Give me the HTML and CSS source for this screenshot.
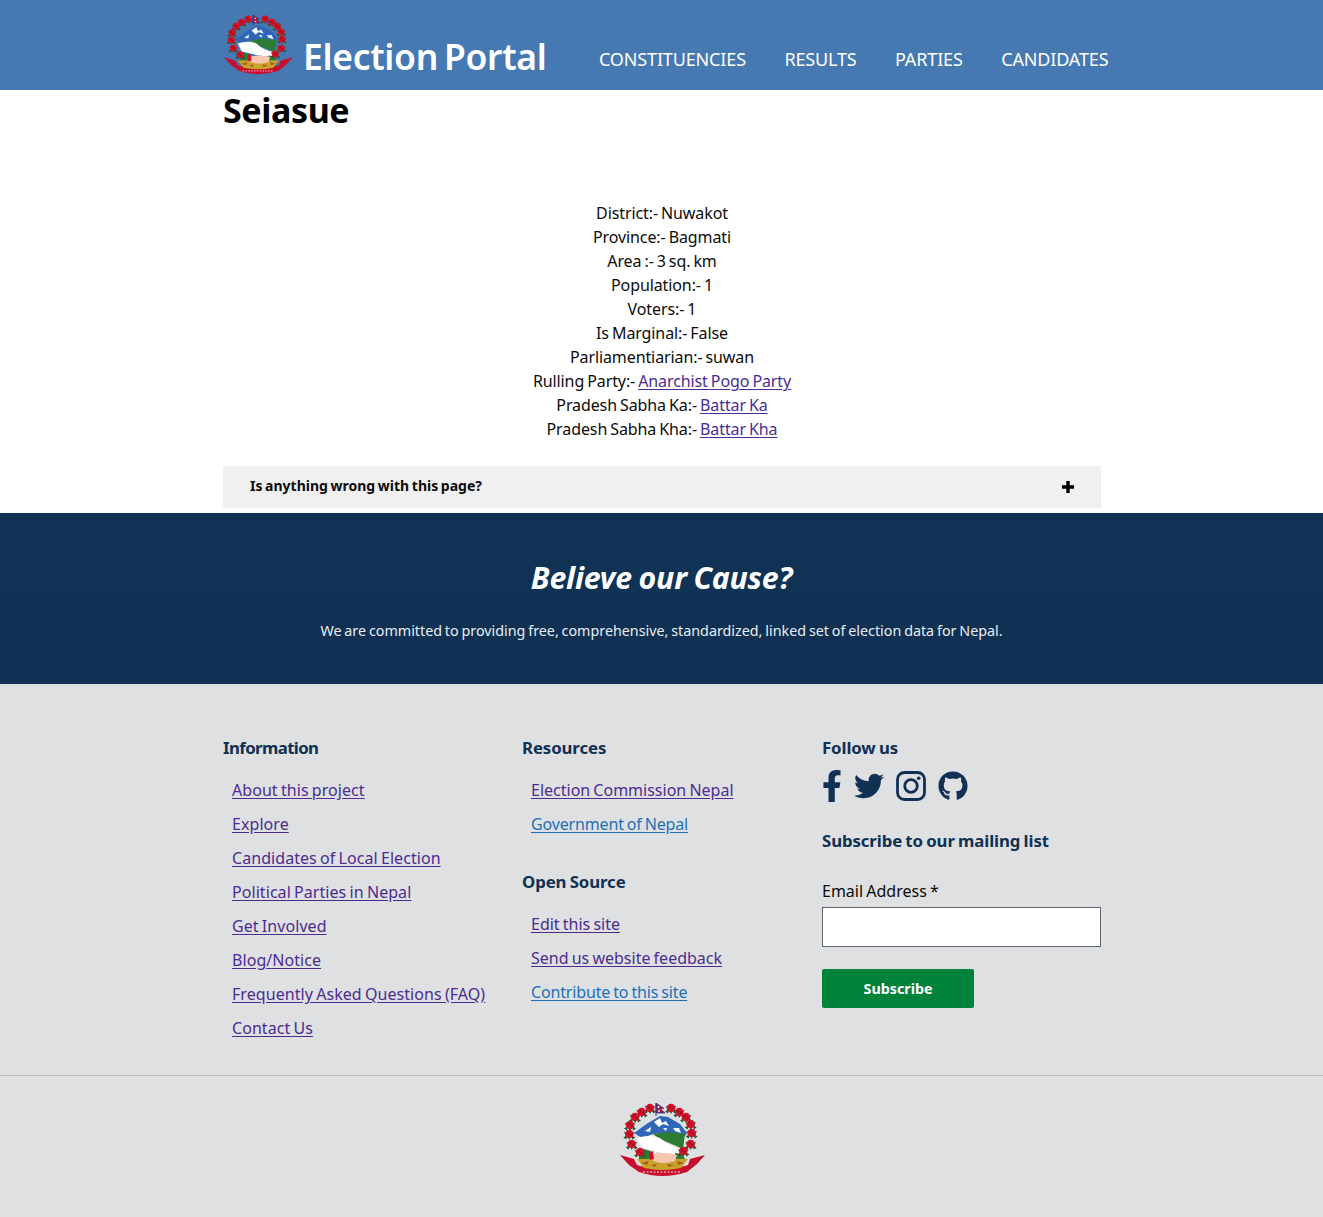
FILE: index.html
```html
<!DOCTYPE html>
<html lang="en">
<head>
<meta charset="utf-8">
<title>Seiasue - Election Portal</title>
<link rel="stylesheet" href="styles.css">
</head>
<body>
<svg class="defs" width="0" height="0" aria-hidden="true">
  <defs>
    <g id="flower">
      <path d="M-6 3.5 L-2 1 L-3 5.5 Z M6 3.5 L2 1 L3 5.5 Z M0 6 L-2 2 L2 2 Z M-5.5 -2 L-2 -1 L-3.5 1 Z M5.5 -2 L2 -1 L3.5 1 Z" fill="#1c5a2a"/>
      <circle r="4.3" fill="#d2132a"/>
      <circle cx="-1.3" cy="-0.9" r="1.3" fill="#a30d20"/>
      <circle cx="1.4" cy="1" r="1.2" fill="#a30d20"/>
    </g>
    <symbol id="emblem" viewBox="0 0 86 74">
      <path d="M15 30 L29 20 L41 13 L49 14 L61 21 L68 30 L66 33 L49 30 L34 31 L23 35 Z" fill="#2f66b8"/>
      <path d="M35 19 L41 15 L43 20 L47 18 L50 23 L44 21 L40 24 Z M26 28 L32 24 L31 29 Z M54 25 L60 25 L62 30 L56 28 Z M44 25 L48 25 L47 28 Z" fill="#fff"/>
      <path d="M34 31 L49 29 L66 31 L64 46 L41 36 Z" fill="#2d7a33"/>
      <path d="M18 35 Q30 31 41 35 Q50 44 65 46 L63 52 L44 50 L23 45 Z" fill="#fff"/>
      <path d="M20 45 L32 48 L33 56 L20 56 Z M56 50 L63 51 L66 56 L56 56 Z" fill="#2d7a33"/>
      <path d="M1 52 L15 56 L18 62 Q43 70 69 62 L71 56 L86 52 L78 61 L68 69 Q43 77 20 69 L10 62 Z" fill="#c8102e"/>
      <path d="M18 56 L69 56 L62 65 Q43 69 25 65 Z" fill="#c9a227"/>
      <path d="M22 60 L30 58 L28 62 Z M58 58 L65 60 L59 62 Z M32 62 L38 61 L36 64 Z M48 61 L55 62 L50 64 Z" fill="#a85a20"/>
      <path d="M32 52 Q44 48 58 52 L56 58 Q44 62 34 58 Z" fill="#f6c7b0"/>
      <path d="M30 50 L34 48 L35 56 L31 57 Z" fill="#c8102e"/>
      <path d="M24 69 L62 69" stroke="#f3d9d9" stroke-width="1" stroke-dasharray="2 1.5" fill="none"/>
      <use href="#flower" x="31" y="5"/><use href="#flower" x="22.7" y="9"/><use href="#flower" x="16" y="14"/>
      <use href="#flower" x="11" y="22"/><use href="#flower" x="10.3" y="31"/><use href="#flower" x="12.7" y="41"/><use href="#flower" x="21" y="49"/>
      <use href="#flower" x="52" y="5"/><use href="#flower" x="60.3" y="9"/><use href="#flower" x="67" y="14"/>
      <use href="#flower" x="71.7" y="21"/><use href="#flower" x="72.7" y="30"/><use href="#flower" x="71.7" y="41"/><use href="#flower" x="64.3" y="48"/>
      <path d="M37 0 L45 5.5 H41 L46 10 H37 Z" fill="#c8102e" stroke="#1b3c8c" stroke-width="0.8"/>
      <path d="M37 0 V13" stroke="#1b3c8c" stroke-width="1"/>
      <circle cx="39.5" cy="4" r="0.9" fill="#fff"/><circle cx="40" cy="8" r="0.9" fill="#fff"/>
    </symbol>
  </defs>
</svg>

<header class="site-header">
  <div class="container header-row">
    <a class="brand" href="#">
      <svg class="brand-logo"><use href="#emblem"/></svg>
      <span class="brand-name">Election Portal</span>
    </a>
    <nav class="main-nav">
      <a href="#">CONSTITUENCIES</a>
      <a href="#">RESULTS</a>
      <a href="#">PARTIES</a>
      <a href="#">CANDIDATES</a>
    </nav>
  </div>
</header>

<main class="container">
  <h1 class="page-title">Seiasue</h1>
  <div class="facts">
    <div>District:- Nuwakot</div>
    <div>Province:- Bagmati</div>
    <div>Area :- 3 sq. km</div>
    <div>Population:- 1</div>
    <div>Voters:- 1</div>
    <div>Is Marginal:- False</div>
    <div>Parliamentiarian:- suwan</div>
    <div>Rulling Party:- <a class="visited" href="#">Anarchist Pogo Party</a></div>
    <div>Pradesh Sabha Ka:- <a class="visited" href="#">Battar Ka</a></div>
    <div>Pradesh Sabha Kha:- <a class="visited" href="#">Battar Kha</a></div>
  </div>
  <div class="feedback">
    <span class="feedback-label">Is anything wrong with this page?</span>
    <svg class="plus" viewBox="0 0 12 12"><path d="M4.3 0h3.4v4.3H12v3.4H7.7V12H4.3V7.7H0V4.3h4.3z"/></svg>
  </div>
</main>

<section class="cause">
  <h2 class="cause-title">Believe our Cause?</h2>
  <p class="cause-text">We are committed to providing free, comprehensive, standardized, linked set of election data for Nepal.</p>
</section>

<footer class="site-footer">
  <div class="container footer-cols">
    <div class="col col-info">
      <h3 class="tight">Information</h3>
      <ul class="links">
        <li><a class="visited" href="#">About this project</a></li>
        <li><a class="visited" href="#">Explore</a></li>
        <li><a class="visited" href="#">Candidates of Local Election</a></li>
        <li><a class="visited" href="#">Political Parties in Nepal</a></li>
        <li><a class="visited" href="#">Get Involved</a></li>
        <li><a class="visited" href="#">Blog/Notice</a></li>
        <li><a class="visited" href="#">Frequently Asked Questions (FAQ)</a></li>
        <li><a class="visited" href="#">Contact Us</a></li>
      </ul>
    </div>
    <div class="col">
      <h3>Resources</h3>
      <ul class="links">
        <li><a class="visited" href="#">Election Commission Nepal</a></li>
        <li><a class="fresh" href="#">Government of Nepal</a></li>
      </ul>
      <h3 class="second">Open Source</h3>
      <ul class="links">
        <li><a class="visited" href="#">Edit this site</a></li>
        <li><a class="visited" href="#">Send us website feedback</a></li>
        <li><a class="fresh" href="#">Contribute to this site</a></li>
      </ul>
    </div>
    <div class="col">
      <h3>Follow us</h3>
      <div class="social">
        <svg class="ico ico-fb" viewBox="0 0 320 512"><path d="M279.14 288l14.22-92.66h-88.91v-60.13c0-25.35 12.42-50.06 52.24-50.06h40.42V6.26S260.43 0 225.36 0c-73.22 0-121.08 44.38-121.08 124.72v70.62H22.89V288h81.39v224h100.17V288z"/></svg>
        <svg class="ico ico-tw" viewBox="0 0 512 512"><path d="M459.37 151.716c.325 4.548.325 9.097.325 13.645 0 138.72-105.583 298.558-298.558 298.558-59.452 0-114.68-17.219-161.137-47.106 8.447.974 16.568 1.299 25.34 1.299 49.055 0 94.213-16.568 130.274-44.832-46.132-.975-84.792-31.188-98.112-72.772 6.498.974 12.995 1.624 19.818 1.624 9.421 0 18.843-1.3 27.614-3.573-48.081-9.747-84.143-51.98-84.143-102.985v-1.299c13.969 7.797 30.214 12.67 47.431 13.319-28.264-18.843-46.781-51.005-46.781-87.391 0-19.492 5.197-37.36 14.294-52.954 51.655 63.675 129.3 105.258 216.365 109.807-1.624-7.797-2.599-15.918-2.599-24.04 0-57.828 46.782-104.934 104.934-104.934 30.213 0 57.502 12.67 76.67 33.137 23.715-4.548 46.456-13.32 66.599-25.34-7.798 24.366-24.366 44.833-46.132 57.827 21.117-2.273 41.584-8.122 60.426-16.243-14.292 20.791-32.161 39.308-52.628 54.253z"/></svg>
        <svg class="ico ico-ig" viewBox="0 0 30 30"><rect class="ig-line" x="1.5" y="1.5" width="27" height="27" rx="7"/><circle class="ig-line" cx="15" cy="15" r="6.3"/><circle cx="22.7" cy="7.3" r="1.8"/></svg>
        <svg class="ico ico-gh" viewBox="0 0 496 512"><path d="M165.9 397.4c0 2-2.3 3.6-5.2 3.6-3.3.3-5.6-1.3-5.6-3.6 0-2 2.3-3.6 5.2-3.6 3-.3 5.6 1.3 5.6 3.6zm-31.1-4.5c-.7 2 1.3 4.3 4.3 4.9 2.6 1 5.6 0 6.2-2s-1.3-4.3-4.3-5.2c-2.6-.7-5.5.3-6.2 2.3zm44.2-1.7c-2.9.7-4.9 2.6-4.6 4.9.3 2 2.9 3.3 5.9 2.6 2.9-.7 4.9-2.6 4.6-4.6-.3-1.9-3-3.2-5.9-2.9zM244.8 8C106.1 8 0 113.3 0 252c0 110.9 69.8 205.8 169.5 239.2 12.8 2.3 17.3-5.6 17.3-12.1 0-6.2-.3-40.4-.3-61.4 0 0-70 15-84.7-29.8 0 0-11.4-29.1-27.8-36.6 0 0-22.9-15.7 1.6-15.4 0 0 24.9 2 38.6 25.8 21.9 38.6 58.6 27.5 72.9 20.9 2.3-16 8.8-27.1 16-33.7-55.9-6.2-112.3-14.3-112.3-110.5 0-27.5 7.6-41.3 23.6-58.9-2.6-6.5-11.1-33.3 2.6-67.9 20.9-6.5 69 27 69 27 20-5.6 41.5-8.5 62.8-8.5s42.8 2.9 62.8 8.5c0 0 48.1-33.6 69-27 13.7 34.7 5.2 61.4 2.6 67.9 16 17.7 25.8 31.5 25.8 58.9 0 96.5-58.9 104.2-114.8 110.5 9.2 7.9 17 22.9 17 46.4 0 33.7-.3 75.4-.3 83.6 0 6.5 4.6 14.4 17.3 12.1C428.2 457.8 496 362.9 496 252 496 113.3 383.5 8 244.8 8z"/></svg>
      </div>
      <h3 class="subscribe-title">Subscribe to our mailing list</h3>
      <form class="subscribe">
        <label class="field-label" for="email">Email Address *</label>
        <input class="field-input" id="email" type="email">
        <button class="btn" type="button">Subscribe</button>
      </form>
    </div>
  </div>
  <div class="footer-logo">
    <svg class="footer-emblem"><use href="#emblem"/></svg>
  </div>
</footer>
</body>
</html>
```

FILE: styles.css
```css
* { box-sizing: border-box; }
html, body { margin: 0; padding: 0; }
body {
  font-family: "Noto Sans", "Open Sans", sans-serif;
  font-size: 16px;
  line-height: 24px;
  word-spacing: -1px;
  color: #0b0c0c;
  background: #fff;
}
.defs { display: block; height: 0; }
.container { width: 878px; margin-left: calc(50% - 438.5px); }
a { text-underline-offset: 2px; }
.visited { color: #4c2c92; }
.fresh { color: #1d70b8; letter-spacing: -0.15px; }

.site-header { height: 90px; background: #4679b2; }
.header-row { display: flex; align-items: flex-start; height: 90px; }
.brand { display: flex; flex: none; align-items: flex-start; color: #fff; text-decoration: none; width: 376px; padding-top: 15px; }
.brand-logo { width: 70px; height: 60px; }
.brand-name { font-size: 35.5px; line-height: 40px; font-weight: 600; margin: 21px 0 0 10px; letter-spacing: -0.3px; word-spacing: -3px; white-space: nowrap; }
.main-nav { display: flex; gap: 38.5px; padding-top: 46px; }
.main-nav a { color: #fff; text-decoration: none; font-size: 18px; line-height: 26px; letter-spacing: -0.15px; white-space: nowrap; }

.page-title { margin: -1px 0 0; font-size: 34px; line-height: 42px; font-weight: 700; color: #000; letter-spacing: -0.4px; }
.facts { margin-top: 70px; text-align: center; letter-spacing: -0.1px; }
.feedback { display: flex; justify-content: space-between; align-items: center; height: 42px; margin-top: 25px; padding: 0 27px; background: #f0f0f0; font-size: 14px; line-height: 40px; font-weight: 700; word-spacing: -1px; }
.feedback-label { margin-top: -2px; }
.plus { width: 12px; height: 12px; fill: #000; }

.cause { height: 171px; margin-top: 5px; background: linear-gradient(#103255 84px, #103154 84px); color: #fff; text-align: center; padding-top: 47px; }
.cause-title { margin: 0; font-size: 30.3px; line-height: 36px; font-style: italic; font-weight: 700; letter-spacing: -0.2px; }
.cause-text { margin: 23px 0 0; font-size: 14.3px; line-height: 24px; word-spacing: -0.85px; color: #e8edf2; }

.site-footer { background: #dee0e2; height: 533px; }
.footer-cols { display: grid; grid-template-columns: 299px 300px 1fr; height: 391px; padding-top: 52px; }
.col h3 { margin: 0; font-size: 16.8px; line-height: 24px; font-weight: 700; letter-spacing: -0.1px; color: #103154; }
.col h3.tight { letter-spacing: -0.6px; }
.col h3.second { margin-top: 29px; }
.links { list-style: none; margin: 13px 0 0; padding: 0 0 0 9px; }
.links li { height: 34px; line-height: 34px; white-space: nowrap; }
.col-info .links { letter-spacing: 0.06px; }
.social { display: flex; align-items: center; gap: 12px; height: 36px; margin-top: 8px; }
.ico { fill: #103154; }
.ico-fb { width: 20px; height: 32px; }
.ico-tw { width: 30px; height: 30px; }
.ico-ig { width: 30px; height: 30px; }
.ico-gh { width: 30px; height: 30px; }
.ig-line { fill: none; stroke: #103154; stroke-width: 2.8; }
.col h3.subscribe-title { margin-top: 25px; }
.subscribe { margin-top: 26px; }
.field-label { display: block; line-height: 24px; color: #0b0c0c; }
.field-input { display: block; width: 279px; height: 40px; margin-top: 4px; border: 1px solid #5f6670; background: #fff; border-radius: 0; padding: 5px; }
.btn { display: block; width: 152px; height: 39px; margin-top: 22px; border: 0; border-radius: 2px; background: #00823b; color: #fff; font: 700 14.3px/24px "Noto Sans", sans-serif; }

.footer-logo { display: flex; justify-content: center; border-top: 1px solid #bfc1c3; padding-top: 27px; }
.footer-emblem { width: 86px; height: 74px; }
```
